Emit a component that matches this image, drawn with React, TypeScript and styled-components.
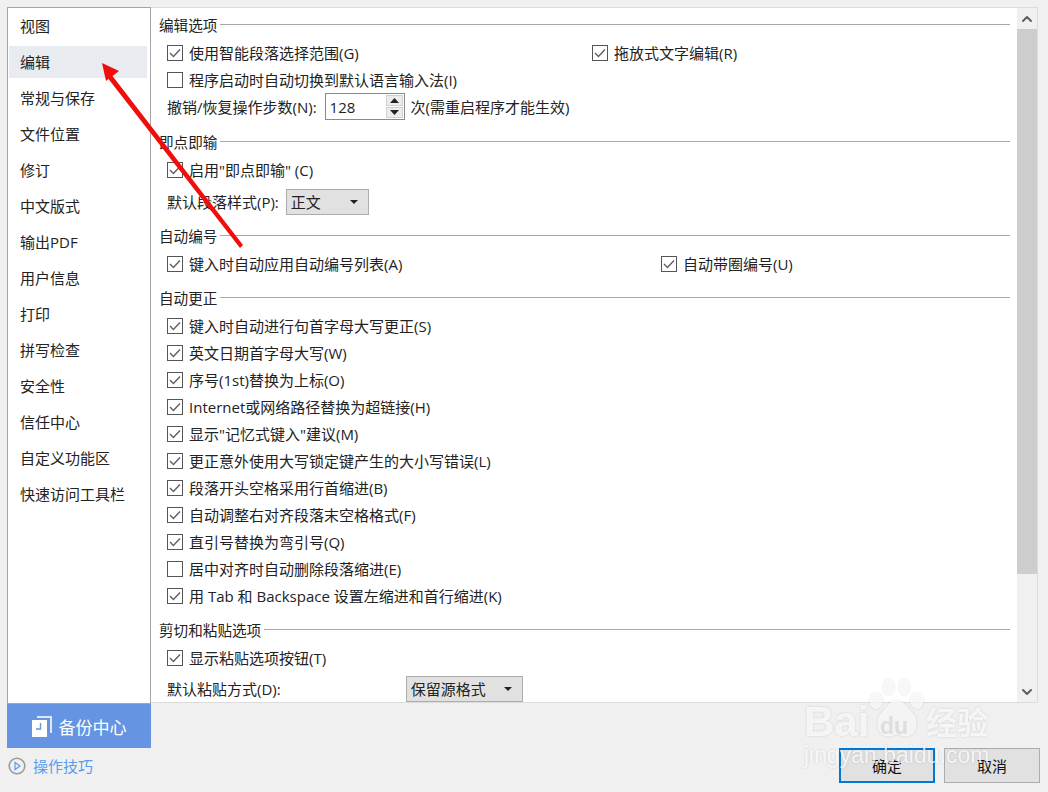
import React from "react";
import styled, { createGlobalStyle } from "styled-components";
import { ChevronUp, ChevronDown } from "lucide-react";

const GlobalStyle = createGlobalStyle`
  html, body {
    margin: 0;
    padding: 0;
    background: #f0f0f0;
    font-family: "Open Sans", "Noto Sans CJK SC", sans-serif;
    color: #222;
  }
`;

const Page = styled.div`
  position: relative;
  width: 1048px;
  height: 792px;
  overflow: hidden;
  background: #f0f0f0;
  display: flex;
  box-sizing: border-box;
  padding: 7px 8px 0 7px;
`;
const LeftColumn = styled.div`
  width: 144px;
  flex-shrink: 0;
  display: flex;
  flex-direction: column;
`;
const Nav = styled.nav`
  height: 697px;
  box-sizing: border-box;
  background: #fff;
  border: 1px solid #a6a6a6;
  padding: 2px 3px 0 1px;
  display: flex;
  flex-direction: column;
  gap: 4px;
`;
const NavItem = styled.div<{ $active?: boolean }>`
  height: 32px;
  line-height: 32px;
  padding-left: 11px;
  font-size: 15px;
  background: ${(p) => (p.$active ? "#e8ebf0" : "transparent")};
`;
const BackupButton = styled.div`
  height: 44px;
  background: #6494e2;
  color: #fff;
  font-size: 17px;
  display: flex;
  align-items: center;
  justify-content: center;
  gap: 7px;
`;
const TipLink = styled.div`
  display: flex;
  align-items: center;
  gap: 7px;
  height: 35px;
  padding-left: 1px;
  font-size: 15px;
  color: #5b9bf0;
`;
const RightColumn = styled.div`
  flex: 1;
  display: flex;
  flex-direction: column;
`;
const Panel = styled.div`
  height: 696px;
  margin-right: 2px;
  box-sizing: border-box;
  background: #fff;
  border: 1px solid #dcdcdc;
  border-left: none;
  display: flex;
  overflow: hidden;
`;
const Content = styled.div`
  flex: 1;
  padding: 0 7px 0 8px;
  overflow: hidden;
`;
const SectionTitle = styled.div<{ $gap: number }>`
  display: flex;
  align-items: center;
  gap: 3px;
  height: 24px;
  margin-top: ${(p) => p.$gap}px;
  font-size: 14.6px;
  &::after {
    content: "";
    flex: 1;
    height: 1px;
    background: #a8a8a8;
  }
`;
const Row = styled.div<{ $top?: number }>`
  display: flex;
  align-items: center;
  height: 27px;
  padding-left: 8px;
  margin-top: ${(p) => p.$top ?? 0}px;
  font-size: 15px;
  white-space: nowrap;
`;
const CheckItem = styled.div<{ $width?: number }>`
  display: flex;
  align-items: center;
  gap: 6px;
  ${(p) => (p.$width ? `width: ${p.$width}px;` : "")}
`;
const Box = styled.span`
  width: 16px;
  height: 16px;
  box-sizing: border-box;
  border: 1px solid #555;
  background: #fff;
  display: flex;
  align-items: center;
  justify-content: center;
`;
const SpinBox = styled.div`
  width: 80px;
  height: 27px;
  box-sizing: border-box;
  border: 1px solid #8a8a8a;
  margin-left: 8px;
  padding-left: 4px;
  display: flex;
  align-items: center;
  justify-content: space-between;
  background: #fff;
`;
const SpinButtons = styled.div`
  width: 17px;
  height: 23px;
  margin-right: 1px;
  display: flex;
  flex-direction: column;
  gap: 1px;
`;
const SpinButton = styled.div`
  flex: 1;
  background: #ececec;
  border: 1px solid #d0d0d0;
  display: flex;
  align-items: center;
  justify-content: center;
`;
const SpinHint = styled.span`
  margin-left: 6px;
`;
const Select = styled.div<{ $width: number; $left: number }>`
  width: ${(p) => p.$width}px;
  height: 26px;
  box-sizing: border-box;
  margin-left: ${(p) => p.$left}px;
  padding: 0 10px 0 4px;
  background: #e1e1e1;
  border: 1px solid #adadad;
  display: flex;
  align-items: center;
  justify-content: space-between;
`;
const Caret = styled.span`
  width: 0;
  height: 0;
  border-left: 4px solid transparent;
  border-right: 4px solid transparent;
  border-top: 4px solid #222;
`;
const ScrollBar = styled.div`
  width: 20px;
  background: #f0f0f0;
  display: flex;
  flex-direction: column;
  flex-shrink: 0;
`;
const ScrollArrow = styled.div`
  height: 21px;
  display: flex;
  align-items: center;
  justify-content: center;
  color: #606060;
`;
const ScrollThumb = styled.div`
  height: 545px;
  background: #cdcdcd;
`;
const ScrollSpacer = styled.div`
  flex: 1;
`;
const Footer = styled.div`
  display: flex;
  justify-content: flex-end;
  gap: 9px;
  margin-top: 45px;
`;
const DialogButton = styled.button<{ $primary?: boolean }>`
  width: 96px;
  height: 35px;
  box-sizing: border-box;
  background: #e1e1e1;
  border: ${(p) => (p.$primary ? "2px solid #0078d7" : "1px solid #adadad")};
  font-family: inherit;
  font-size: 15px;
  color: #111;
  padding: 0;
`;
const ArrowOverlay = styled.svg`
  position: absolute;
  left: 0;
  top: 0;
  pointer-events: none;
`;
const Watermark = styled.div`
  position: absolute;
  left: 804px;
  top: 678px;
  width: 200px;
  height: 100px;
  color: rgba(255, 255, 255, 0.75);
  filter: drop-shadow(0 0 1px rgba(0, 0, 0, 0.18));
  pointer-events: none;
`;
const PawIcon = styled.svg`
  position: absolute;
  left: 63px;
  top: 1px;
`;
const WatermarkBrand = styled.div`
  position: absolute;
  left: 0;
  top: 20px;
  font-family: "Liberation Sans", sans-serif;
  font-weight: 700;
  font-size: 42px;
  line-height: 48px;
`;
const WatermarkDu = styled.div`
  position: absolute;
  left: 76px;
  top: 36px;
  font-family: "Liberation Sans", sans-serif;
  font-weight: 700;
  font-size: 23px;
  line-height: 24px;
  color: #dedede;
`;
const WatermarkCn = styled.div`
  position: absolute;
  left: 122px;
  top: 22px;
  font-size: 31px;
  line-height: 44px;
  font-weight: 700;
`;
const WatermarkUrl = styled.div`
  position: absolute;
  left: 0;
  top: 63px;
  font-family: "Liberation Sans", sans-serif;
  font-size: 23px;
  line-height: 28px;
`;

const navItems = [
  "视图",
  "编辑",
  "常规与保存",
  "文件位置",
  "修订",
  "中文版式",
  "输出PDF",
  "用户信息",
  "打印",
  "拼写检查",
  "安全性",
  "信任中心",
  "自定义功能区",
  "快速访问工具栏",
];

const correctItems: [string, boolean][] = [
  ["键入时自动进行句首字母大写更正(S)", true],
  ["英文日期首字母大写(W)", true],
  ["序号(1st)替换为上标(O)", true],
  ["Internet或网络路径替换为超链接(H)", true],
  ['显示"记忆式键入"建议(M)', true],
  ["更正意外使用大写锁定键产生的大小写错误(L)", true],
  ["段落开头空格采用行首缩进(B)", true],
  ["自动调整右对齐段落末空格格式(F)", true],
  ["直引号替换为弯引号(Q)", true],
  ["居中对齐时自动删除段落缩进(E)", false],
  ["用 Tab 和 Backspace 设置左缩进和首行缩进(K)", true],
];

const Check = ({ label, checked = true, width }: { label: string; checked?: boolean; width?: number }) => (
  <CheckItem $width={width}>
    <Box>
      {checked && (
        <svg width="12" height="10" viewBox="0 0 12 10">
          <path d="M1 5l3.4 3.4L11 1.4" fill="none" stroke="#606060" strokeWidth="1.4" />
        </svg>
      )}
    </Box>
    {label}
  </CheckItem>
);

export default function App() {
  return (
    <Page>
      <GlobalStyle />
      <LeftColumn>
        <Nav>
          {navItems.map((item) => (
            <NavItem key={item} $active={item === "编辑"}>
              {item}
            </NavItem>
          ))}
        </Nav>
        <BackupButton>
          <svg width="20" height="21" viewBox="0 0 20 21">
            <path d="M5 0h15v17h-2V2H5z" fill="#dfe8f8" />
            <path d="M0 4h15v17H0z" fill="#fff" />
            <path d="M8.500 7v6H4" fill="none" stroke="#6494e2" strokeWidth="1.4" />
          </svg>
          备份中心
        </BackupButton>
        <TipLink>
          <svg width="18" height="18" viewBox="0 0 18 18">
            <circle cx="9" cy="9" r="7.800" fill="none" stroke="#9a9a9a" strokeWidth="1.600" />
            <path d="M7 5.500l5 3.500-5 3.500z" fill="none" stroke="#5b9bf0" strokeWidth="1.200" />
          </svg>
          操作技巧
        </TipLink>
      </LeftColumn>
      <RightColumn>
        <Panel>
          <Content>
            <SectionTitle $gap={4}>编辑选项</SectionTitle>
            <Row $top={3}>
              <Check label="使用智能段落选择范围(G)" width={425} />
              <Check label="拖放式文字编辑(R)" />
            </Row>
            <Row>
              <Check label="程序启动时自动切换到默认语言输入法(I)" checked={false} />
            </Row>
            <Row>
              撤销/恢复操作步数(N):
              <SpinBox>
                128
                <SpinButtons>
                  <SpinButton>
                    <svg width="9" height="5" viewBox="0 0 9 5"><path d="M4.500 0L9 5H0z" fill="#222" /></svg>
                  </SpinButton>
                  <SpinButton>
                    <svg width="9" height="5" viewBox="0 0 9 5"><path d="M4.500 5L9 0H0z" fill="#222" /></svg>
                  </SpinButton>
                </SpinButtons>
              </SpinBox>
              <SpinHint>次(需重启程序才能生效)</SpinHint>
            </Row>
            <SectionTitle $gap={9}>即点即输</SectionTitle>
            <Row $top={3}>
              <Check label='启用"即点即输" (C)' />
            </Row>
            <Row $top={5}>
              默认段落样式(P):
              <Select $width={83} $left={7}>
                正文
                <Caret />
              </Select>
            </Row>
            <SectionTitle $gap={8}>自动编号</SectionTitle>
            <Row $top={3}>
              <Check label="键入时自动应用自动编号列表(A)" width={494} />
              <Check label="自动带圈编号(U)" />
            </Row>
            <SectionTitle $gap={8}>自动更正</SectionTitle>
            {correctItems.map(([label, checked], i) => (
              <Row key={label} $top={i === 0 ? 3 : 0}>
                <Check label={label} checked={checked} />
              </Row>
            ))}
            <SectionTitle $gap={8}>剪切和粘贴选项</SectionTitle>
            <Row $top={3}>
              <Check label="显示粘贴选项按钮(T)" />
            </Row>
            <Row $top={4}>
              默认粘贴方式(D):
              <Select $width={117} $left={125}>
                保留源格式
                <Caret />
              </Select>
            </Row>
          </Content>
          <ScrollBar>
            <ScrollArrow>
              <ChevronUp size={16} strokeWidth={3} />
            </ScrollArrow>
            <ScrollThumb />
            <ScrollSpacer />
            <ScrollArrow>
              <ChevronDown size={16} strokeWidth={3} />
            </ScrollArrow>
          </ScrollBar>
        </Panel>
        <Footer>
          <DialogButton $primary>确定</DialogButton>
          <DialogButton>取消</DialogButton>
        </Footer>
      </RightColumn>
      <ArrowOverlay width="1048" height="792" viewBox="0 0 1048 792">
        <path d="M102 63L119 71L112.500 76L243 245L240 248L108.500 79L106 81Z" fill="#f20d0d" />
      </ArrowOverlay>
      <Watermark>
        <PawIcon width="60" height="60" viewBox="0 0 66 66">
          <g fill="rgba(255,255,255,0.75)">
            <ellipse cx="10" cy="24" rx="7" ry="9" />
            <ellipse cx="24" cy="9" rx="6" ry="9" />
            <ellipse cx="41" cy="9" rx="6" ry="9" />
            <ellipse cx="55" cy="24" rx="7" ry="9" />
            <path d="M33 24c-9 0-11 8-17 13-7 6-6 26 7 26 5 0 7-2 10-2s5 2 10 2c13 0 14-20 7-26-6-5-8-13-17-13z" />
          </g>
        </PawIcon>
        <WatermarkBrand>Bai</WatermarkBrand>
        <WatermarkDu>du</WatermarkDu>
        <WatermarkCn>经验</WatermarkCn>
        <WatermarkUrl>jingyan.baidu.com</WatermarkUrl>
      </Watermark>
    </Page>
  );
}
